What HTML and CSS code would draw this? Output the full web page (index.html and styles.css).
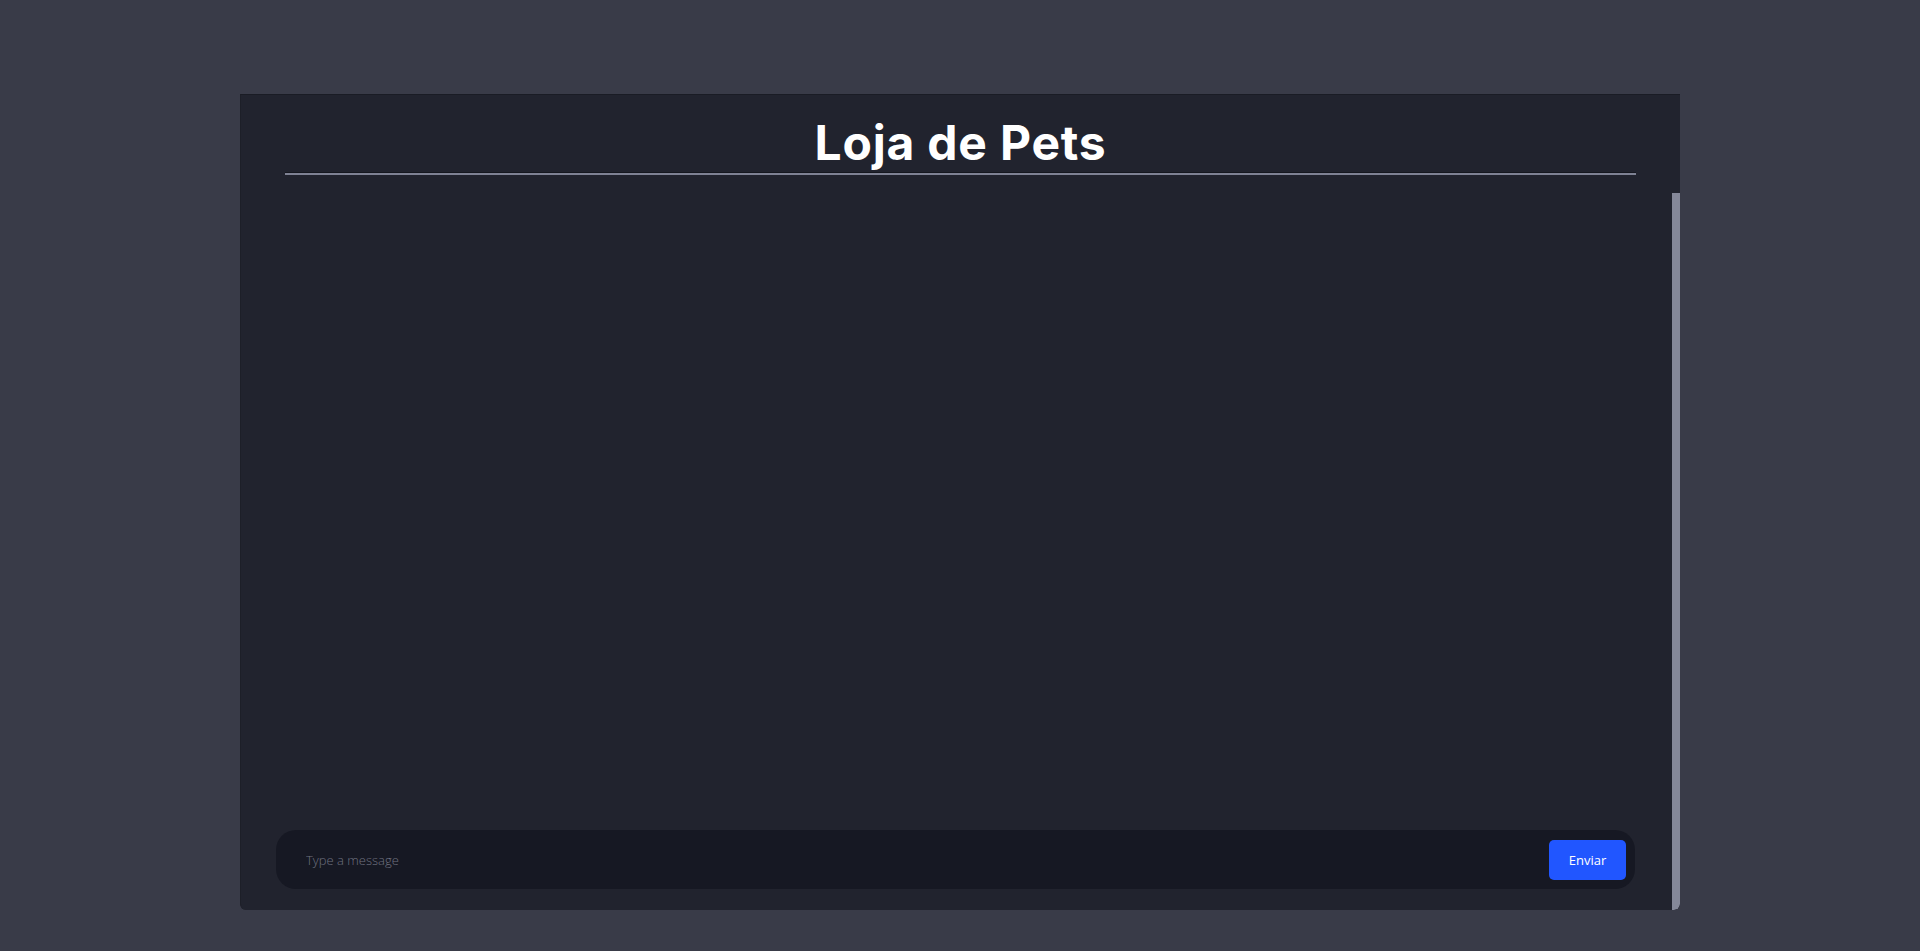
FILE: index.html
```html
<!DOCTYPE html>
<html lang="pt">
<head>
<meta charset="utf-8">
<title>Loja de Pets</title>
<link rel="stylesheet" href="styles.css">
</head>
<body>
<div class="chat">
  <header class="chat-header">
    <h1 class="chat-title">Loja de Pets</h1>
    <div class="chat-rule"></div>
  </header>
  <div class="chat-body">
    <main class="chat-main">
      <div class="messages"></div>
      <form class="composer">
        <input class="composer-input" type="text" placeholder="Type a message">
        <button class="composer-send" type="button">Enviar</button>
      </form>
    </main>
    <div class="scrollbar"><div class="scrollbar-thumb"></div></div>
  </div>
</div>
</body>
</html>
```

FILE: styles.css
```css
* { box-sizing: border-box; }
html, body { margin: 0; padding: 0; }
body {
  background: #393b48;
  font-family: "Open Sans", "Liberation Sans", sans-serif;
  height: 951px;
  overflow: hidden;
}
.chat {
  width: 1440px;
  height: 816px;
  margin: 94px auto 0;
  background: #21232e;
  border-top: 1px solid #1a1c25;
  border-left: 1px solid #1d1f28;
  border-radius: 0 0 6px 6px;
  display: flex;
  flex-direction: column;
  overflow: hidden;
}
.chat-header {
  height: 98px;
  display: flex;
  flex-direction: column;
  align-items: center;
  padding: 0 44px;
}
.chat-title {
  margin: 22px 0 0;
  font-family: Inter, "Liberation Sans", sans-serif;
  font-weight: 700;
  font-size: 48px;
  line-height: 52px;
  color: #ffffff;
  letter-spacing: 0.8px;
}
.chat-rule {
  align-self: stretch;
  height: 3px;
  margin-top: 3px;
  border-top: 1px solid #15171f;
  background: #7f8294;
}
.chat-body {
  flex: 1;
  display: flex;
  min-height: 0;
}
.chat-main {
  flex: 1;
  display: flex;
  flex-direction: column;
  padding: 0 37px 21px 35px;
}
.messages { flex: 1; }
.composer {
  height: 59px;
  margin: 0;
  background: #161823;
  border-radius: 20px;
  display: flex;
  align-items: center;
  padding: 0 9px 0 30px;
}
.composer-input {
  flex: 1;
  background: transparent;
  border: none;
  outline: none;
  color: #c8cad4;
  font-family: "Open Sans", "Liberation Sans", sans-serif;
  font-size: 13px;
  font-weight: 300;
  padding: 0;
}
.composer-input::placeholder { color: #6f7280; }
.composer-send {
  width: 77px;
  height: 40px;
  border: none;
  border-radius: 5px;
  background: #2156ff;
  color: #ffffff;
  font-family: "Open Sans", "Liberation Sans", sans-serif;
  font-size: 13px;
  padding: 0;
}
.scrollbar {
  width: 8px;
  display: flex;
  flex-direction: column;
}
.scrollbar-thumb {
  flex: 1;
  background: #858899;
  border-radius: 0 0 6px 0;
}
```
